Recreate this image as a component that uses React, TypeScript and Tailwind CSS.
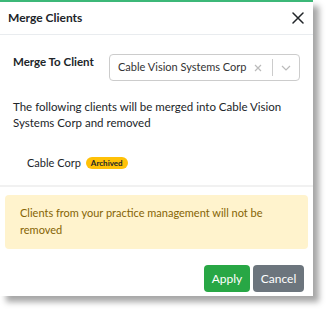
import React from "react";

export default function App() {
  return (
    <div className="w-[329px] h-[312px] bg-white overflow-hidden" style={{ fontFamily: 'Lato, "Noto Sans", sans-serif' }}>
      <div className="w-[313px] h-[296px] bg-white border-t-2 border-[#3cb878] shadow-[6px_6px_6px_rgba(0,0,0,0.35)] flex flex-col">
        <div className="h-[33px] flex items-center justify-between pl-[8px] pr-[9px] border-b border-[#e9ecef]">
          <span className="text-[12px] font-bold text-[#212529]">Merge Clients</span>
          <svg width="12" height="12" viewBox="0 0 12 12">
            <path d="M1 1 L11 11 M11 1 L1 11" stroke="#212529" strokeWidth="1.5" strokeLinecap="round" />
          </svg>
        </div>
        <div className="flex flex-col px-[13px] pt-[18px] h-[152px] border-b-2 border-[#f1f1f1]">
          <div className="flex items-start">
            <span className="w-[96px] text-[11.5px] font-bold text-[#212529] leading-[18px]">Merge To Client</span>
            <div className="w-[191px] h-[27px] mt-[1px] border border-[#ccc] rounded-[4px] flex items-center pl-[8px]">
              <span className="flex-1 text-[11px] text-[#333]">Cable Vision Systems Corp</span>
              <svg width="8" height="8" viewBox="0 0 8 8" className="mr-[10px]">
                <path d="M1 1 L7 7 M7 1 L1 7" stroke="#bbb" strokeWidth="1.2" />
              </svg>
              <div className="w-px h-[17px] bg-[#ccc]" />
              <svg width="10" height="6" viewBox="0 0 10 6" className="mx-[8px]">
                <path d="M1 1 L5 5 L9 1" stroke="#bbb" strokeWidth="1.2" fill="none" />
              </svg>
            </div>
          </div>
          <p className="mt-[18px] text-[11.5px] leading-[16px] text-[#212529]">
            The following clients will be merged into Cable Vision Systems Corp and removed
          </p>
          <div className="mt-[24px] ml-[14px] flex items-center gap-[5px]">
            <span className="text-[11px] text-[#212529]">Cable Corp</span>
            <span className="bg-[#ffc107] text-[#212529] text-[8px] font-bold rounded-full px-[5px] h-[12px] flex items-center">Archived</span>
          </div>
        </div>
        <div className="mx-[5px] mt-[8px] h-[54px] bg-[#fff3cd] rounded-[4px] px-[15px] pt-[9px] text-[11px] leading-[17px] text-[#856404]">
          Clients from your practice management will not be removed
        </div>
        <div className="flex justify-end gap-[3px] pr-[9px] mt-[16px]">
          <button className="w-[46px] h-[27px] bg-[#28a745] text-white text-[12px] rounded-[4px]">Apply</button>
          <button className="w-[51px] h-[27px] bg-[#6c757d] text-white text-[12px] rounded-[4px]">Cancel</button>
        </div>
      </div>
    </div>
  );
}
